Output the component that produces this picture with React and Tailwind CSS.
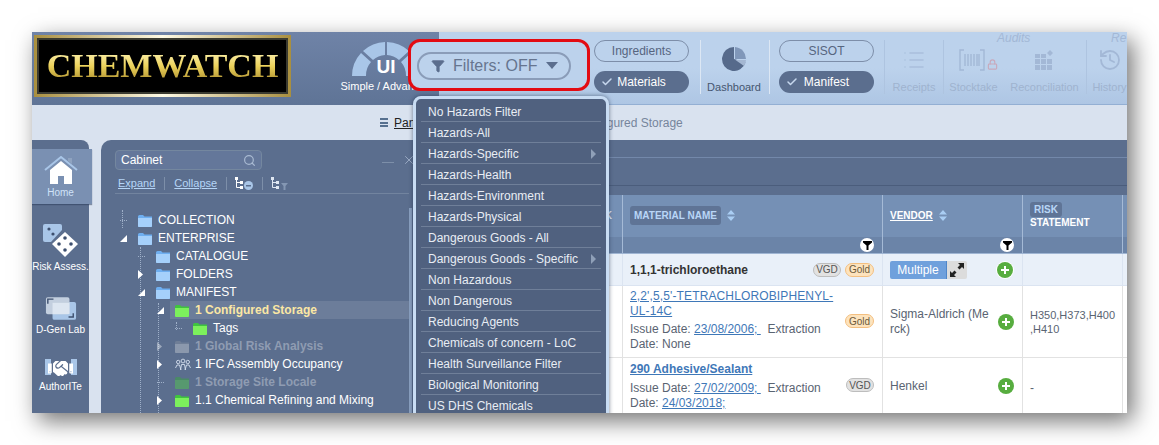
import React from "react";
import { Check, Filter, History, List, Lock, Search, X } from "lucide-react";
import { FaHandshake } from "react-icons/fa";

const menuItems = [
  ["No Hazards Filter"],
  ["Hazards-All"],
  ["Hazards-Specific", true],
  ["Hazards-Health"],
  ["Hazards-Environment"],
  ["Hazards-Physical"],
  ["Dangerous Goods - All"],
  ["Dangerous Goods - Specific", true],
  ["Non Hazardous"],
  ["Non Dangerous"],
  ["Reducing Agents"],
  ["Chemicals of concern - LoC"],
  ["Health Surveillance Filter"],
  ["Biological Monitoring"],
  ["US DHS Chemicals"],
];

const treeRows = [
  { label: "COLLECTION", indent: "pl-[23px]", icon: "blue", tick: true },
  { label: "ENTERPRISE", indent: "pl-[23px]", icon: "blue", arrow: "open" },
  { label: "CATALOGUE", indent: "pl-[41px]", icon: "blue", tick: true },
  { label: "FOLDERS", indent: "pl-[41px]", icon: "blue", arrow: "closed" },
  { label: "MANIFEST", indent: "pl-[41px]", icon: "blue", arrow: "open" },
  { label: "1 Configured Storage", indent: "pl-[60px]", icon: "green", arrow: "open", selected: true },
  { label: "Tags", indent: "pl-[78px]", icon: "green", tick: true },
  { label: "1 Global Risk Analysis", indent: "pl-[60px]", icon: "gray", arrow: "closed", dim: true },
  { label: "1 IFC Assembly Occupancy", indent: "pl-[60px]", icon: "people", arrow: "closed" },
  { label: "1 Storage Site Locale", indent: "pl-[60px]", icon: "dimgreen", tick: true, dim: true },
  { label: "1.1 Chemical Refining and Mixing", indent: "pl-[60px]", icon: "green", arrow: "closed" },
  { label: "", indent: "pl-[60px]", icon: "green" },
];

const folderColors = {
  blue: ["#6eaef0", "#a5d0fb"],
  green: ["#3fc43f", "#7cf05c"],
  gray: ["#6f7e97", "#8b98ad"],
  dimgreen: ["#4a8a66", "#57996f"],
};

const Folder = ({ kind }) => {
  const [tab, body] = folderColors[kind];
  return (
    <svg width="14" height="13" viewBox="0 0 14 13" className="shrink-0">
      <path d="M0 2.5 Q0 1 1.5 1 H5 L6.5 2.5 H14 V12 Q14 13 13 13 H1 Q0 13 0 12 Z" fill={tab} />
      <path d="M0 4 H14 V12 Q14 13 13 13 H1 Q0 13 0 12 Z" fill={body} />
    </svg>
  );
};

const People = () => (
  <svg width="16" height="13" viewBox="0 0 16 13" fill="none" stroke="#d5dfee" strokeWidth="0.9" className="shrink-0">
    <circle cx="3.2" cy="4" r="1.7" />
    <circle cx="8" cy="3" r="1.9" />
    <circle cx="12.8" cy="4" r="1.7" />
    <path d="M0.5 10 L2 7 H4.5 L6 12 M5.5 12 L6.5 6.5 H9.5 L10.5 12 M10 12 L11.5 7 H14 L15.5 10" />
  </svg>
);

const TreeRow = ({ row }) => (
  <div className={`relative flex h-[18px] items-center ${row.indent}`}>
    {row.arrow === "open" && (
      <svg width="7" height="7" viewBox="0 0 7 7" className="mr-[11px] -ml-[18px] shrink-0">
        <path d="M7 0 V7 H0 Z" fill="#fff" />
      </svg>
    )}
    {row.arrow === "closed" && (
      <svg width="5" height="9" viewBox="0 0 5 9" className={`mr-[13px] -ml-[18px] shrink-0 ${row.dim ? "opacity-40" : ""}`}>
        <path d="M0 0 L5 4.5 L0 9 Z" fill="#fff" />
      </svg>
    )}
    {row.tick && <span className="mr-[11px] -ml-[18px] w-[7px] shrink-0 border-t border-dotted border-[#9fb0c9]" />}
    {row.icon === "people" ? <People /> : <Folder kind={row.icon} />}
    <span
      className={`whitespace-nowrap ${row.icon === "people" ? "ml-[4px]" : "ml-[6px]"} ${
        row.selected ? "font-bold text-[#fbe7a4]" : row.dim ? "font-bold text-[#8f9cb2]" : "text-white"
      }`}
    >
      {row.label}
    </span>
  </div>
);

const Sort = ({ color = "#a9cdf3" }) => (
  <svg width="8" height="11" viewBox="0 0 8 11" className="shrink-0">
    <path d="M4 0 L8 4.5 H0 Z M4 11 L8 6.5 H0 Z" fill={color} />
  </svg>
);

const FilterDot = () => (
  <span className="flex h-[14px] w-[14px] items-center justify-center rounded-full bg-white">
    <svg width="9" height="9" viewBox="0 0 9 9">
      <path d="M0 0 H9 V1.5 L5.5 4.5 V9 H3.5 V4.5 L0 1.5 Z" fill="#000" />
    </svg>
  </span>
);

const Plus = () => (
  <span className="flex h-[16px] w-[16px] shrink-0 items-center justify-center rounded-full bg-[#57ad3f]">
    <svg width="10" height="10" viewBox="0 0 10 10">
      <path d="M4 1 H6 V4 H9 V6 H6 V9 H4 V6 H1 V4 H4 Z" fill="#fff" />
    </svg>
  </span>
);

const Badge = ({ kind }) =>
  kind === "VGD" ? (
    <span className="flex h-[14px] w-[28px] items-center justify-center rounded-full border border-[#bdbdbd] bg-[#e2e2e2] text-[10px] text-[#555]">
      VGD
    </span>
  ) : (
    <span className="flex h-[14px] w-[29px] items-center justify-center rounded-full border border-[#f3bf80] bg-[#fde3bd] text-[10px] text-[#6b5a3c]">
      Gold
    </span>
  );

const RailItem = ({ label, active, gap = "mt-[3px]", children }) => (
  <div
    className={`flex flex-col items-center ${
      active ? "h-[55px] w-[60px] bg-[#7a90b2] pr-[3px] pt-[7px] shadow-[0_1px_1px_rgba(40,55,85,0.5)]" : "w-[57px]"
    }`}
  >
    {children}
    <span className={`whitespace-nowrap text-[10px] leading-[12px] ${gap} ${active ? "text-[#cfe2f8]" : "text-white"}`}>{label}</span>
  </div>
);

const Gauge = () => (
  <svg width="80" height="40" viewBox="0 0 80 40" fill="#a9c6e8">
    <path d="M6 40 A34 34 0 0 1 15 17 L25 26 A20 20 0 0 0 20 40 Z" />
    <path d="M17 15 A34 34 0 0 1 39 6 V19 A20 20 0 0 0 27 24 Z" />
    <path d="M41 6 A34 34 0 0 1 63 15 L53 24 A20 20 0 0 0 41 19 Z" />
    <path d="M65 17 A34 34 0 0 1 74 40 H60 A20 20 0 0 0 55 26 Z" />
  </svg>
);

const Pill = ({ label, on }) =>
  on ? (
    <div className="relative flex h-[22px] w-[95px] items-center justify-center rounded-full bg-[#5b6e8e] text-white">
      <Check size={12} strokeWidth={3} className="absolute left-[7px] text-[#c7d8ee]" />
      <span>{label}</span>
    </div>
  ) : (
    <div className="flex h-[22px] w-[95px] items-center justify-center rounded-full border border-[#7d8ea9] text-[#56657f]">
      {label}
    </div>
  );

const Tool = ({ label, className, children }) => (
  <div className={`flex h-[54px] flex-col items-center justify-between ${className}`}>
    <div className="mt-[8px] flex h-[24px] items-center">{children}</div>
    <span className="text-[11px] leading-[13px] text-[#9fb3cf]">{label}</span>
  </div>
);

const App = () => {
  return (
    <div className="h-[445px] overflow-hidden bg-white pl-[32px] pt-[32px] font-['Liberation_Sans',Arial,sans-serif] text-[12px]">
      <div className="relative flex h-[381px] w-[1095px] flex-col overflow-hidden bg-[#d9e2ef] shadow-[6px_8px_22px_rgba(0,0,0,0.55)]">
        {/* top bar */}
        <div className="flex h-[73px] shrink-0">
          <div className="flex w-[407px] shrink-0 bg-gradient-to-b from-[#6f83a7] to-[#5f7496] pl-[2px] pt-[3px]">
            <div className="h-[62px] w-[257px] bg-gradient-to-r from-[#a98f3e] via-[#fffbe6] to-[#a98f3e] p-[3px]">
              <div className="flex h-full items-center justify-center border-2 border-[#3a3a30] bg-black">
                <span className="bg-gradient-to-b from-[#fff6b8] via-[#ecd25a] to-[#a88a2c] bg-clip-text font-['Liberation_Serif',serif] text-[34px] font-bold leading-none text-transparent">
                  CHEMWATCH
                </span>
              </div>
            </div>
            <div className="ml-[50px] flex w-[90px] shrink-0 flex-col items-center pt-px">
              <div className="relative">
                <Gauge />
                <span className="absolute bottom-[-2px] left-0 right-0 text-center text-[19px] font-bold leading-[22px] text-white">UI</span>
              </div>
              <span className="mt-[4px] whitespace-nowrap text-[11px] leading-[13px] text-white">Simple / Advanced</span>
            </div>
          </div>
          <div className="flex min-w-0 flex-1 items-start overflow-hidden border-b border-[#93afd3] bg-gradient-to-b from-[#bcd2ec] via-[#bcd2ec] to-[#aec6e4] pl-[155px] pt-[8px]">
            <div className="flex shrink-0 flex-col gap-[9px]">
              <Pill label="Ingredients" />
              <Pill label="Materials" on />
            </div>
            <div className="ml-[11px] flex h-[54px] w-[70px] shrink-0 flex-col items-center justify-between border-x border-[#dce7f4] pr-[2px]">
              <svg width="24" height="24" viewBox="0 0 24 24" className="mt-[7px]">
                <path d="M12 12 V0 A12 12 0 1 0 23.5 15.5 Z" fill="#566a8b" />
                <path d="M13 0 A12 12 0 0 1 24 12 H13 Z" fill="#8097b9" />
                <path d="M13.5 13 H24 A12 12 0 0 1 22 19 Z" fill="#a4b7d2" />
              </svg>
              <span className="text-[11px] leading-[13px] text-[#46566f]">Dashboard</span>
            </div>
            <div className="ml-[9px] flex shrink-0 flex-col gap-[9px]">
              <Pill label="SISOT" />
              <Pill label="Manifest" on />
            </div>
            <div className="relative ml-[10px] flex shrink-0">
              <Tool label="Receipts" className="w-[59px] border-l border-[#aec4e0]">
                <List size={24} strokeWidth={1.6} className="text-[#a9bfdc]" />
              </Tool>
              <Tool label="Stocktake" className="w-[60px] border-l border-[#aec4e0]">
                <svg width="26" height="22" viewBox="0 0 26 22" fill="none" stroke="#a3b8d6" strokeWidth="1.4" className="ml-[10px]">
                  <path d="M5 1 H1 V21 H5 M21 1 H25 V21 H21" />
                  <path d="M6 5 V17 M9 5 V17 M12 5 V17 M15 5 V17 M18 5 V17 M20 5 V17" />
                </svg>
                <Lock size={11} strokeWidth={2.5} className="ml-[2px] mt-[9px] text-[#c8a9bc]" />
              </Tool>
              <Tool label="Reconciliation" className="w-[83px]">
                <svg width="20" height="20" viewBox="0 0 20 20" fill="#a3b8d6">
                  <path d="M0 4h5v4h-5z M6 4h5v4h-5z M0 9h5v5h-5z M6 9h5v5h-5z M12 9h5v5h-5z M0 15h5v5h-5z M6 15h5v5h-5z M12 15h5v5h-5z M12 3l3-3 3 3-3 3z" />
                </svg>
              </Tool>
              <Tool label="History" className="w-[46px] border-l border-[#aec4e0]">
                <History size={24} strokeWidth={1.8} className="text-[#a3b8d6]" />
              </Tool>
              <span className="absolute -top-[11px] left-[113px] text-[12px] italic text-[#a3b8d6]">Audits</span>
              <span className="absolute -top-[11px] left-[227px] text-[12px] italic text-[#a3b8d6]">Re</span>
            </div>
          </div>
        </div>

        {/* breadcrumb bar */}
        <div className="flex h-[35px] shrink-0 items-center pl-[348px] pt-px">
          <span className="mb-[1px] flex h-[9px] w-[8px] flex-col justify-between">
            <span className="h-[2px] bg-[#56708f]" />
            <span className="h-[2px] bg-[#56708f]" />
            <span className="h-[2px] bg-[#56708f]" />
          </span>
          <span className="ml-[6px] text-[#222] underline">Panel</span>
          <span className="ml-[154px] whitespace-nowrap text-[#76859c]">Configured Storage</span>
        </div>

        {/* main area */}
        <div className="flex min-h-0 flex-1">
          <div className="flex w-[57px] shrink-0 flex-col rounded-tr-[8px] bg-[#5b6e8e] pt-[9px]">
            <RailItem label="Home" active gap="mt-px">
              <svg width="34" height="30" viewBox="0 0 34 30">
                <path d="M1 14 L17 1 L33 14" fill="none" stroke="#a9c6e8" strokeWidth="2" />
                <path d="M6 14 L17 5 L28 14 V28 H20 V20 H14 V28 H6 Z" fill="#fff" />
                <path d="M24 2 h4 v6 l-4 -3 Z" fill="#8fa3c0" />
              </svg>
            </RailItem>
            <div className="mt-[19px]">
              <RailItem label="Risk Assess.">
                <svg width="38" height="35" viewBox="0 0 38 35">
                  <path d="M3 1 H18 Q20 1 20 3 V7 L9 19 H3 Q1 19 1 17 V3 Q1 1 3 1 Z" fill="#a9c6e8" />
                  <circle cx="7" cy="6" r="1.6" fill="#3d4f6e" />
                  <circle cx="11" cy="11" r="1.6" fill="#3d4f6e" />
                  <path d="M23 9 L36 21 L23 34 L10 21 Z" fill="#fff" />
                  <circle cx="23" cy="15" r="1.8" fill="#3d4f6e" />
                  <circle cx="17" cy="21" r="1.8" fill="#3d4f6e" />
                  <circle cx="29" cy="21" r="1.8" fill="#3d4f6e" />
                  <circle cx="23" cy="27" r="1.8" fill="#3d4f6e" />
                </svg>
              </RailItem>
            </div>
            <div className="mt-[24px]">
              <RailItem label="D-Gen Lab" gap="mt-[4px]">
                <svg width="32" height="23" viewBox="0 0 34 24">
                  <rect x="8" y="5" width="25" height="19" rx="2" fill="#a9c6e8" />
                  <rect x="1" y="0" width="25" height="18" rx="2" fill="#c3cfdf" />
                  <rect x="8" y="6" width="18" height="12" fill="#dde6f1" />
                  <path d="M3 7 V2 H9" fill="none" stroke="#3d4f6e" strokeWidth="1.5" />
                  <path d="M30 17 V21 H25" fill="none" stroke="#3d4f6e" strokeWidth="1.5" />
                </svg>
              </RailItem>
            </div>
            <div className="mt-[23px]">
              <RailItem label="AuthorITe" gap="mt-[4px]">
                <div className="relative flex h-[18px] w-[32px] items-center justify-center">
                  <span className="absolute left-0 top-0 h-[16px] w-[6px] bg-[#a9c6e8]" />
                  <span className="absolute right-0 top-0 h-[16px] w-[6px] bg-[#a9c6e8]" />
                  <FaHandshake size={25} className="relative text-white" />
                </div>
              </RailItem>
            </div>
          </div>

          <div className="ml-[12px] flex min-w-0 flex-1 overflow-hidden rounded-tl-[10px] bg-[#5b6e8e]">
            {/* tree panel */}
            <div className="relative w-[319px] shrink-0 pl-[14px] pt-[10px]">
              <div className="flex items-center">
                <div className="flex h-[20px] w-[147px] items-center justify-between rounded-[4px] border border-[#74879f] bg-[#64779a] pl-[5px] pr-[5px] text-white">
                  Cabinet
                  <Search size={13} strokeWidth={2.2} className="text-[#a9bad2]" />
                </div>
                <span className="ml-[120px] mt-[4px] h-px w-[12px] bg-[#7d8fa9]" />
                <X size={14} strokeWidth={1.2} className="ml-[8px] text-[#b3c2d8]" />
              </div>
              <div className="mt-[6px] flex h-[14px] w-[300px] items-center text-[11px] text-[#b5d5f7]">
                <span className="ml-[3px] underline">Expand</span>
                <span className="ml-[9px] h-[13px] w-px bg-[#7d8fa9]" />
                <span className="ml-[9px] underline">Collapse</span>
                <span className="ml-[9px] h-[13px] w-px bg-[#7d8fa9]" />
                <svg width="18" height="13" viewBox="0 0 18 13" className="ml-[8px]">
                  <path d="M0 0h3v3h-3z M5 4h3v3h-3z M5 9h3v3h-3z" fill="#fff" />
                  <path d="M1.5 3 V10.5 H5 M1.5 5.5 H5" stroke="#fff" fill="none" />
                  <circle cx="13.5" cy="8.5" r="4.5" fill="#a9c6e8" />
                  <path d="M11 8h5v1.4h-5z" fill="#5b6e8e" />
                </svg>
                <span className="ml-[9px] h-[13px] w-px bg-[#7d8fa9]" />
                <svg width="18" height="13" viewBox="0 0 18 13" className="ml-[8px]">
                  <path d="M0 0h3v3h-3z M5 4h3v3h-3z M5 9h3v3h-3z" fill="#dfe7f2" />
                  <path d="M1.5 3 V10.5 H5 M1.5 5.5 H5" stroke="#dfe7f2" fill="none" />
                  <path d="M10 6 H17 L14.5 9 V13 H12.5 V9 Z" fill="#8497b3" />
                </svg>
              </div>
              <div className="mt-[3px] h-px w-[294px] bg-[#72849f]" />
              <div className="relative mt-[17px] h-[250px]">
                <span className="absolute left-[7px] -top-px h-[18px] border-l border-dotted border-[#9fb0c9]" />
                <span className="absolute bottom-0 left-[25px] top-[36px] border-l border-dotted border-[#9fb0c9]" />
                <span className="absolute bottom-0 left-[43px] top-[92px] border-l border-dotted border-[#9fb0c9]" />
                <span className="absolute left-[61px] top-[111px] h-[8px] border-l border-dotted border-[#9fb0c9]" />
                {treeRows.map((row) => (
                  <div key={row.label || "last"} className="relative">
                    {row.selected && <div className="absolute inset-y-0 left-[55px] w-[239px] bg-[#6c7d9a]" />}
                    <TreeRow row={row} />
                  </div>
                ))}
              </div>
              <div className="absolute bottom-0 right-[8px] top-[68px] w-[3px] bg-[#8ba0c0]" />
            </div>

            {/* table */}
            <div className="flex min-w-0 flex-1 flex-col">
              <div className="h-[55px] shrink-0 pt-[17px]">
                <div className="h-[29px] border-y border-b-[#4b5d7c] border-t-[#7388aa]" />
              </div>
              <div className="grid h-[42px] shrink-0 grid-cols-[203px_260px_140px_100px_1fr] bg-[#7590b5] text-[10px] font-bold text-white">
                <div className="flex items-center justify-end border-r border-[#a5bad6] pb-px pr-[10px] text-[#dfe9f6]">K</div>
                <div className="flex items-center gap-[6px] border-r border-[#a5bad6] pb-px pl-[7px]">
                  <span className="rounded-[3px] bg-[#5f7496] px-[4px] py-[2px] text-[#b9d6f7]">MATERIAL NAME</span>
                  <Sort />
                </div>
                <div className="flex items-center gap-[6px] border-r border-[#a5bad6] pb-px pl-[7px]">
                  <span className="underline">VENDOR</span>
                  <Sort />
                </div>
                <div className="border-r border-[#a5bad6] pl-[7px] pt-[7px] leading-[12px]">
                  <span className="block w-fit rounded-[3px] bg-[#5f7496] px-[4px] py-[1.5px] text-[#b9d6f7]">RISK</span>
                  STATEMENT
                </div>
                <div />
              </div>
              <div className="grid h-[17px] shrink-0 grid-cols-[203px_260px_140px_100px_1fr] border-b border-[#9fb5d3] bg-[#6b84a8]">
                <div className="border-r border-[#a5bad6]" />
                <div className="flex items-center justify-end border-r border-[#a5bad6] pr-[8px]">
                  <FilterDot />
                </div>
                <div className="flex items-center justify-end border-r border-[#a5bad6] pr-[8px]">
                  <FilterDot />
                </div>
                <div className="border-r border-[#a5bad6]" />
                <div />
              </div>
              <div className="grid h-[32px] shrink-0 grid-cols-[203px_260px_140px_100px_1fr] border-b border-[#dbe4f1] bg-[#e9f0f9] text-[#333]">
                <div className="border-r border-[#dbe4f1]" />
                <div className="flex items-center border-r border-[#dbe4f1] pl-[7px] pr-[8px]">
                  <span className="font-bold">1,1,1-trichloroethane</span>
                  <span className="ml-auto flex gap-[4px]">
                    <Badge kind="VGD" />
                    <Badge kind="Gold" />
                  </span>
                </div>
                <div className="flex items-center border-r border-[#dbe4f1] pl-[7px]">
                  <span className="flex h-[18px] w-[57px] items-center justify-center rounded-l-[2px] border-r border-[#4f86c9] bg-[#6fa0dc] text-white">
                    Multiple
                  </span>
                  <span className="flex h-[18px] w-[20px] items-center justify-center rounded-r-[2px] bg-[#dcdcdc]">
                    <svg width="14" height="14" viewBox="0 0 14 14" fill="#222">
                      <path d="M8 0 H14 V6 L12 4 L9.5 6.5 L7.5 4.5 L10 2 Z M6 14 H0 V8 L2 10 L4.5 7.5 L6.5 9.5 L4 12 Z" />
                    </svg>
                  </span>
                  <span className="ml-[29px] rounded-full bg-white p-[1px]">
                    <Plus />
                  </span>
                </div>
                <div className="border-r border-[#dbe4f1]" />
                <div />
              </div>
              <div className="grid h-[72px] shrink-0 grid-cols-[203px_260px_140px_100px_1fr] border-b border-[#e2e2e2] bg-white text-[#5a6472]">
                <div className="border-r border-[#e2e2e2]" />
                <div className="relative border-r border-[#e2e2e2] pl-[7px] pr-[42px] pt-[3px] leading-[15px]">
                  <span className="tracking-[0.13px] text-[#3f78b8] underline">2,2',5,5'-TETRACHLOROBIPHENYL-UL-14C</span>
                  <div className="mt-[3px]">
                    Issue Date: <span className="text-[#3f78b8] underline">23/08/2006;&nbsp;</span>&nbsp; Extraction
                  </div>
                  <div>Date: None</div>
                  <span className="absolute right-[8px] top-[28px]">
                    <Badge kind="Gold" />
                  </span>
                </div>
                <div className="flex items-center border-r border-[#e2e2e2] pl-[7px]">
                  <span className="mr-[9px] w-[99px] break-all leading-[15px]">Sigma-Aldrich (Merck)</span>
                  <Plus />
                </div>
                <div className="flex items-center border-r border-[#e2e2e2] pl-[7px]">
                  <span className="w-[90px] text-[11px] leading-[14px]">
                    H350,H373,H400
                    <br />
                    ,H410
                  </span>
                </div>
                <div />
              </div>
              <div className="grid min-h-0 flex-1 grid-cols-[203px_260px_140px_100px_1fr] bg-white text-[#5a6472]">
                <div className="border-r border-[#e2e2e2]" />
                <div className="relative border-r border-[#e2e2e2] pl-[7px] pr-[42px] pt-[4px] leading-[15px]">
                  <span className="font-bold text-[#3f78b8] underline">290 Adhesive/Sealant</span>
                  <div className="mt-[4px]">
                    Issue Date: <span className="text-[#3f78b8] underline">27/02/2009;&nbsp;</span>&nbsp; Extraction
                  </div>
                  <div>
                    Date: <span className="text-[#3f78b8] underline">24/03/2018;</span>
                  </div>
                  <span className="absolute right-[8px] top-[20px]">
                    <Badge kind="VGD" />
                  </span>
                </div>
                <div className="flex items-start border-r border-[#e2e2e2] pl-[7px] pt-[20px]">
                  <span className="mr-[9px] w-[99px] pt-px leading-[15px]">Henkel</span>
                  <Plus />
                </div>
                <div className="border-r border-[#e2e2e2] pl-[7px] pt-[21px]">-</div>
                <div />
              </div>
            </div>
          </div>
        </div>

        {/* filters button, highlighted */}
        <div className="absolute left-[376px] top-[7px] flex h-[52px] w-[182px] items-center rounded-[12px] border-[3px] border-[#e30b12] bg-[#bcd2ec] pl-[6px]">
          <div className="mt-[1px] flex h-[28px] w-[154px] items-center rounded-full border-2 border-[#8a9cb8] pl-[12px] text-[#66758f]">
            <Filter size={14} fill="#5b6e8e" strokeWidth={1.5} className="text-[#5b6e8e]" />
            <span className="ml-[8px] text-[16px] leading-none">Filters: OFF</span>
            <span className="ml-[9px] h-0 w-0 border-x-[6px] border-t-[7px] border-x-transparent border-t-[#5b6e8e]" />
          </div>
        </div>

        {/* filters dropdown */}
        <div className="absolute left-[381px] top-[64px] h-[340px] w-[196px] rounded-[8px] border-[3px] border-[#c8dcf3] bg-[#50617f] px-[5px] pt-[2px] text-[#e8edf4] shadow-[0_0_4px_rgba(30,45,70,0.6)]">
          {menuItems.map(([label, sub]) => (
            <div key={label} className="flex h-[21px] items-center justify-between border-b border-[#6f7f99] pl-[7px] pr-[5px] pt-px">
              {label}
              {sub && <span className="h-0 w-0 border-y-[5px] border-l-[5px] border-y-transparent border-l-[#8fa0b8]" />}
            </div>
          ))}
        </div>
      </div>
    </div>
  );
};

export default App;
